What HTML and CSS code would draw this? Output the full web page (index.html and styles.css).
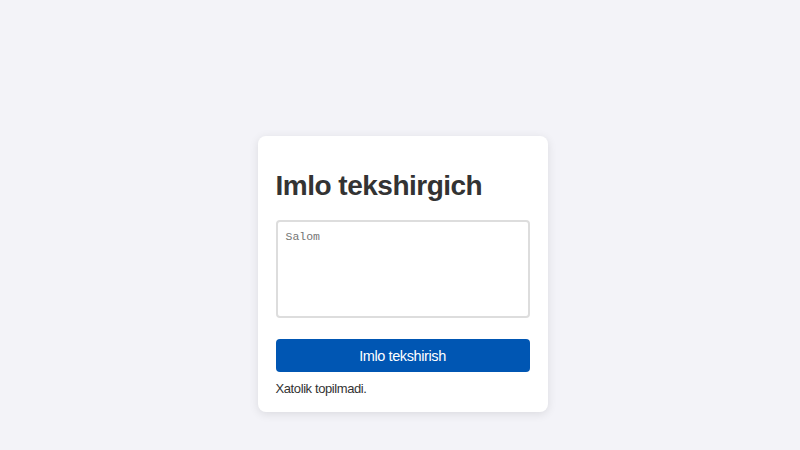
FILE: index.html
```html
<!DOCTYPE html>
<html lang="uz">

<head>
    <meta charset="UTF-8">
    <meta name="viewport" content="width=device-width, initial-scale=1.0">
    <title>Imlo tekshirgich</title>
    <link rel="stylesheet" href="styles.css">
</head>

<body>
    <div class="container">
        <h1>Imlo tekshirgich</h1>
        <textarea id="matn" placeholder="Salom"></textarea>
        <button class="check-btn">Imlo tekshirish</button>
        <p class="result">Xatolik topilmadi.</p>
    </div>
</body>

</html>
```

FILE: styles.css
```css
body {
    font-family: "Liberation Sans", Arial, sans-serif;
    margin: 0;
    padding: 136px 0 0 5px;
    background-color: #f3f3f8;
    height: 100vh;
    box-sizing: border-box;
}

.container {
    width: 254px;
    margin: 0 auto;
    padding: 18px 18px 16px;
    background-color: #fff;
    border-radius: 8px;
    box-shadow: 0 2px 10px rgba(0, 0, 0, 0.1);
}

h1 {
    font-size: 28px;
    letter-spacing: -0.5px;
    color: #333;
    margin: 16px 0 18px;
}

textarea {
    display: block;
    width: 100%;
    height: 98px;
    box-sizing: border-box;
    padding: 8px;
    border: 2px solid #ddd;
    border-radius: 4px;
    font-family: "Liberation Mono", monospace;
    font-size: 11.5px;
    resize: none;
}

.check-btn {
    display: block;
    width: 100%;
    height: 33px;
    margin-top: 21px;
    background-color: #0056b3;
    color: #fff;
    border: none;
    border-radius: 4px;
    font-family: inherit;
    font-size: 14.5px;
    letter-spacing: -0.4px;
    cursor: pointer;
}

.result {
    margin: 9px 0 0;
    font-size: 13px;
    letter-spacing: -0.4px;
    color: #333;
}
```
